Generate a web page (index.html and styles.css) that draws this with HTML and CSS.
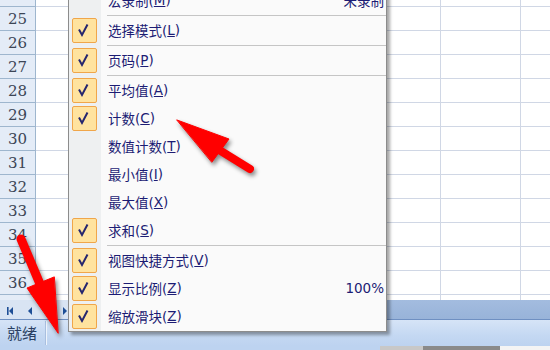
FILE: index.html
```html
<!DOCTYPE html>
<html lang="zh-CN">
<head>
    <meta charset="UTF-8">
    <title>状态栏菜单</title>
    <link rel="stylesheet" href="styles.css">
</head>
<body>
    <div class="sheet">
        <div class="grid">
            <div class="rows">
                <div class="row"><div class="rh">24</div><span class="c first"></span><span class="c"></span><span class="c"></span><span class="c"></span><span class="c"></span><span class="c"></span><span class="c last"></span></div>
                <div class="row"><div class="rh">25</div><span class="c first"></span><span class="c"></span><span class="c"></span><span class="c"></span><span class="c"></span><span class="c"></span><span class="c last"></span></div>
                <div class="row"><div class="rh">26</div><span class="c first"></span><span class="c"></span><span class="c"></span><span class="c"></span><span class="c"></span><span class="c"></span><span class="c last"></span></div>
                <div class="row"><div class="rh">27</div><span class="c first"></span><span class="c"></span><span class="c"></span><span class="c"></span><span class="c"></span><span class="c"></span><span class="c last"></span></div>
                <div class="row"><div class="rh">28</div><span class="c first"></span><span class="c"></span><span class="c"></span><span class="c"></span><span class="c"></span><span class="c"></span><span class="c last"></span></div>
                <div class="row"><div class="rh">29</div><span class="c first"></span><span class="c"></span><span class="c"></span><span class="c"></span><span class="c"></span><span class="c"></span><span class="c last"></span></div>
                <div class="row"><div class="rh">30</div><span class="c first"></span><span class="c"></span><span class="c"></span><span class="c"></span><span class="c"></span><span class="c"></span><span class="c last"></span></div>
                <div class="row"><div class="rh">31</div><span class="c first"></span><span class="c"></span><span class="c"></span><span class="c"></span><span class="c"></span><span class="c"></span><span class="c last"></span></div>
                <div class="row"><div class="rh">32</div><span class="c first"></span><span class="c"></span><span class="c"></span><span class="c"></span><span class="c"></span><span class="c"></span><span class="c last"></span></div>
                <div class="row"><div class="rh">33</div><span class="c first"></span><span class="c"></span><span class="c"></span><span class="c"></span><span class="c"></span><span class="c"></span><span class="c last"></span></div>
                <div class="row"><div class="rh">34</div><span class="c first"></span><span class="c"></span><span class="c"></span><span class="c"></span><span class="c"></span><span class="c"></span><span class="c last"></span></div>
                <div class="row"><div class="rh">35</div><span class="c first"></span><span class="c"></span><span class="c"></span><span class="c"></span><span class="c"></span><span class="c"></span><span class="c last"></span></div>
                <div class="row"><div class="rh">36</div><span class="c first"></span><span class="c"></span><span class="c"></span><span class="c"></span><span class="c"></span><span class="c"></span><span class="c last"></span></div>
                <div class="row"><div class="rh"></div><span class="c first"></span><span class="c"></span><span class="c"></span><span class="c"></span><span class="c"></span><span class="c"></span><span class="c last"></span></div>
            </div>
        </div>

        <!-- Onglets -->
        <div class="tabbar">
            <div class="nav">
                <svg width="80" height="20" viewBox="0 0 80 20">
                    <rect x="7" y="7" width="1.6" height="8" fill="#1f4f96"/>
                    <path d="M13 7 L9 11 L13 15 Z" fill="#1f4f96"/>
                    <path d="M32 7 L28 11 L32 15 Z" fill="#1f4f96"/>
                    <path d="M63 7 L67 11 L63 15 Z" fill="#1f4f96"/>
                </svg>
            </div>
            <div class="tabfill"></div>
        </div>

        <!-- Barre d'état -->
        <div class="status">
            <span class="ready">就绪</span>
        </div>
        <div class="taskbar"><span class="t1"></span><span class="t2"></span><span class="t3"></span><span class="t4"></span></div>
    </div>

    <!-- Menu contextuel -->
    <div class="menu">
        <div class="item"><span class="box off"></span>宏录制(<u>M</u>)<span class="val">未录制</span></div>
        <div class="sep"></div>
        <div class="item"><span class="box"><svg width="23" height="23" viewBox="0 0 23 23"><path d="M6 10.5 L9 16 L14.5 5.5"/></svg></span>选择模式(<u>L</u>)</div>
        <div class="sep"></div>
        <div class="item"><span class="box"><svg width="23" height="23" viewBox="0 0 23 23"><path d="M6 10.5 L9 16 L14.5 5.5"/></svg></span>页码(<u>P</u>)</div>
        <div class="sep"></div>
        <div class="item"><span class="box"><svg width="23" height="23" viewBox="0 0 23 23"><path d="M6 10.5 L9 16 L14.5 5.5"/></svg></span>平均值(<u>A</u>)</div>
        <div class="item"><span class="box"><svg width="23" height="23" viewBox="0 0 23 23"><path d="M6 10.5 L9 16 L14.5 5.5"/></svg></span>计数(<u>C</u>)</div>
        <div class="item"><span class="box off"></span>数值计数(<u>T</u>)</div>
        <div class="item"><span class="box off"></span>最小值(<u>I</u>)</div>
        <div class="item"><span class="box off"></span>最大值(<u>X</u>)</div>
        <div class="item"><span class="box"><svg width="23" height="23" viewBox="0 0 23 23"><path d="M6 10.5 L9 16 L14.5 5.5"/></svg></span>求和(<u>S</u>)</div>
        <div class="sep"></div>
        <div class="item"><span class="box"><svg width="23" height="23" viewBox="0 0 23 23"><path d="M6 10.5 L9 16 L14.5 5.5"/></svg></span>视图快捷方式(<u>V</u>)</div>
        <div class="item"><span class="box"><svg width="23" height="23" viewBox="0 0 23 23"><path d="M6 10.5 L9 16 L14.5 5.5"/></svg></span>显示比例(<u>Z</u>)<span class="val">100%</span></div>
        <div class="item"><span class="box"><svg width="23" height="23" viewBox="0 0 23 23"><path d="M6 10.5 L9 16 L14.5 5.5"/></svg></span>缩放滑块(<u>Z</u>)</div>
    </div>

    <!-- Flèches d'annotation -->
    <svg class="arrows" width="550" height="350" viewBox="0 0 550 350">
        <g fill="#ff0000" stroke="#ff0000" stroke-linecap="round">
            <path d="M177 120 L229 139 L212 162 Z" stroke-width="1"/>
            <line x1="216" y1="148" x2="250" y2="169" stroke-width="8"/>
            <path d="M58 333 L27 288 L54 277 Z" stroke-width="1"/>
            <line x1="21" y1="239" x2="40" y2="284" stroke-width="9"/>
        </g>
    </svg>
</body>
</html>
```

FILE: styles.css
```css
body {
    margin: 0;
    width: 550px;
    height: 350px;
    overflow: hidden;
    position: relative;
    background-color: #fff;
}

.sheet {
    display: flex;
    flex-direction: column;
    height: 350px;
}

.grid {
    height: 300px;
    overflow: hidden;
}

.rows {
    margin-top: -17px;
}

.row {
    display: flex;
    height: 24px;
}

.rh {
    width: 36px;
    box-sizing: border-box;
    padding-top: 2px;
    background-color: #e4ecf7;
    border-right: 1px solid #9eb6ce;
    border-bottom: 1px solid #9eb6ce;
    font: 15px "DejaVu Serif", serif;
    color: #3c4656;
    text-align: center;
    line-height: 21px;
}

.c {
    width: 80px;
    box-sizing: border-box;
    border-right: 1px solid #d0d7e5;
    border-bottom: 1px solid #d0d7e5;
}

.c.first {
    width: 85px;
}

.c.last {
    flex: 1;
    border-right: none;
}

.tabbar {
    display: flex;
    height: 20px;
    box-sizing: border-box;
    border-bottom: 1px solid #6f90c2;
}

.nav {
    width: 120px;
    background-color: #d9e4f3;
}

.nav svg {
    display: block;
}

.tabfill {
    flex: 1;
    background: linear-gradient(#a3bcdf, #98b3d9);
}

.status {
    height: 26px;
    display: flex;
    align-items: center;
    background: linear-gradient(#d6e4f7, #c4d8f2 60%, #bdd3f0);
}

.ready {
    padding: 0 8px 0 7px;
    border-right: 1px solid #a9bfdf;
    box-shadow: 1px 0 0 #eef4fc;
    height: 24px;
    font: 15px "Noto Sans CJK SC", sans-serif;
    line-height: 24px;
    color: #2a3f62;
}

.taskbar {
    display: flex;
    height: 4px;
}

.taskbar .t1 {
    width: 380px;
    background-color: #bdd3f0;
}

.taskbar .t2 {
    width: 43px;
    background-color: #c8c8c8;
}

.taskbar .t3 {
    width: 77px;
    background-color: #8a8a8a;
}

.taskbar .t4 {
    flex: 1;
    background-color: #f4f4f4;
}

.menu {
    position: absolute;
    left: 68px;
    top: -16px;
    width: 319px;
    box-sizing: border-box;
    padding: 1px 0;
    border: 1px solid #8c8c8c;
    background: linear-gradient(to right, #eef0f1 32px, #fafafa 32px);
    box-shadow: 3px 3px 3px rgba(0, 0, 0, 0.35);
    font: 13.5px "DejaVu Sans", "Noto Sans CJK SC", sans-serif;
    color: #1c1c74;
}

.item {
    display: flex;
    align-items: center;
    height: 28px;
    padding: 0 2px 0 3px;
    white-space: nowrap;
}

.box {
    width: 25px;
    height: 25px;
    box-sizing: border-box;
    margin-right: 11px;
    border: 1px solid #f0a64a;
    border-radius: 2px;
    background-color: #ffe39f;
}

.box svg {
    display: block;
}

.box path {
    fill: none;
    stroke: #26266e;
    stroke-width: 2;
}

.box.off {
    visibility: hidden;
}

.val {
    margin-left: auto;
}

.sep {
    height: 1px;
    margin-left: 38px;
    border-bottom: 1px solid #c5c5c5;
}

.arrows {
    position: absolute;
    left: 0;
    top: 0;
    pointer-events: none;
    filter: drop-shadow(2px 3px 2px rgba(0, 0, 0, 0.45));
}
```
